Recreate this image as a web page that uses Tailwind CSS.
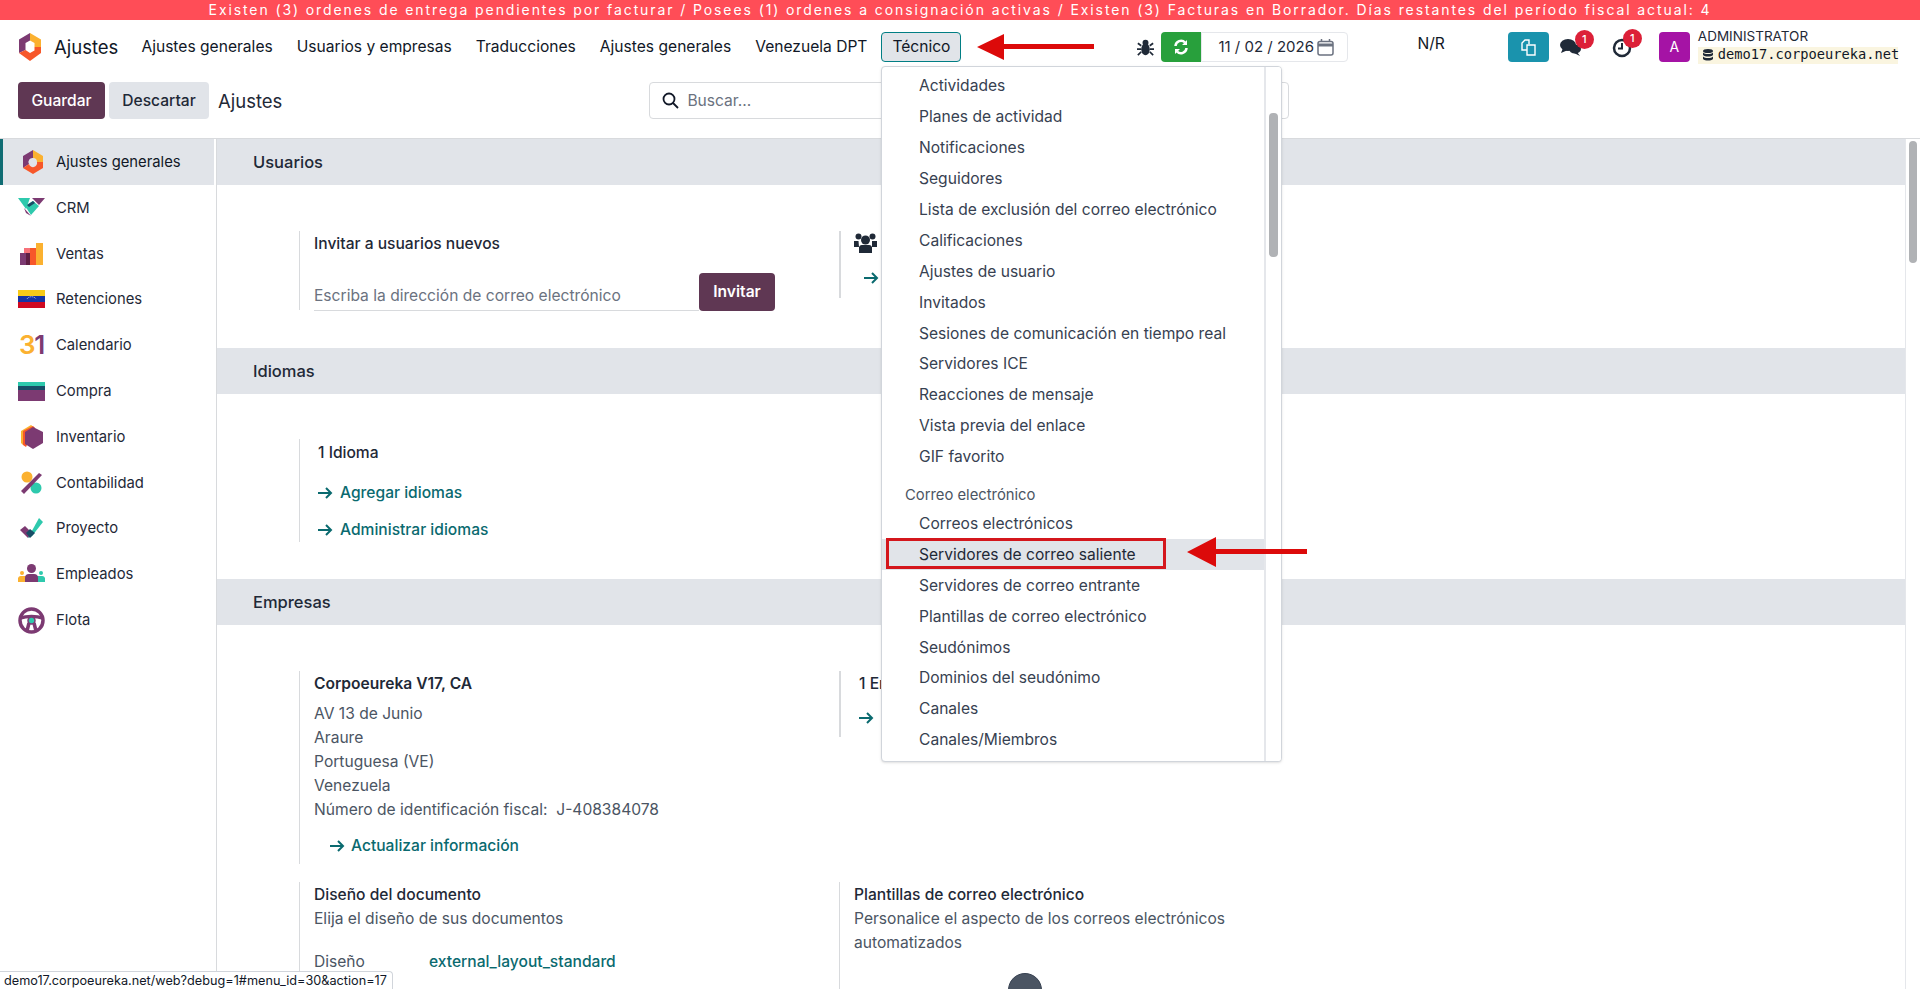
<!DOCTYPE html>
<html lang="es">
<head>
    <meta charset="UTF-8">
    <title>Ajustes</title>
    <script src="https://cdn.jsdelivr.net/npm/@tailwindcss/browser@4"></script>
</head>
<body class="relative h-[989px] overflow-hidden bg-white font-['Inter',sans-serif] text-[15.6px] leading-[22px] text-[#374151]">
    <!-- Banner -->
    <div class="h-5 bg-[#ff4d57] text-white text-center text-[14px] leading-[20px] tracking-[1.9px] whitespace-nowrap">Existen (3) ordenes de entrega pendientes por facturar / Posees (1) ordenes a consignación activas / Existen (3) Facturas en Borrador. Días restantes del período fiscal actual: 4</div>

    <!-- Navbar -->
    <nav class="relative h-[54px] flex items-center pl-[18px] text-[#111827] whitespace-nowrap">
        <svg class="w-[24px] h-[28px]" viewBox="0 0 24 28"><path d="M12 0 23 6.500V14H16.500V10L12 7.500Z" fill="#fbb130"/><path d="M12 0 1 6.500V20L7.500 17V10L12 7.500Z" fill="#7c3a72"/><path d="M1 20 12 28 23 20V14H16.500V17.500L12 20 7.500 17Z" fill="#f7572a"/></svg>
        <span class="ml-[12px] text-[18.5px]">Ajustes</span>
        <span class="ml-[23px]">Ajustes generales</span>
        <span class="ml-[24px]">Usuarios y empresas</span>
        <span class="ml-[24px]">Traducciones</span>
        <span class="ml-[24px]">Ajustes generales</span>
        <span class="ml-[24px]">Venezuela DPT</span>
        <span class="ml-[14px] w-[80px] h-[30px] flex items-center justify-center bg-[#e1e4e9] border border-[#017e84] rounded">Técnico</span>
        <svg class="ml-[16px] w-[117px] h-[32px]" viewBox="0 0 117 32"><path d="M0 16 27 3V13H117V18H27V29Z" fill="#dc0a0a"/></svg>
        <svg class="ml-[43px] w-[17px] h-[17px]" viewBox="0 0 20 20" fill="#1f2937"><ellipse cx="10" cy="12" rx="5" ry="7"/><circle cx="10" cy="4.500" r="3.500"/><path d="M1 5 5 8M19 5 15 8M0 12H5M20 12H15M1 19 5 15M19 19 15 15" stroke="#1f2937" stroke-width="2"/></svg>
        <span class="ml-[7px] w-[40px] h-[30px] rounded-l bg-[#28a03c] flex items-center justify-center">
            <svg class="w-[16px] h-[16px]" viewBox="0 0 16 16" fill="none" stroke="#fff" stroke-width="2.500"><path d="M2.500 7A5.500 5.500 0 0 1 12 3.500M13.500 9A5.500 5.500 0 0 1 4 12.500"/><path d="M14 1V6H9M2 15V10H7" fill="#fff" stroke="none"/></svg>
        </span>
        <div class="w-[147px] h-[30px] flex items-center pl-[16px] border border-[#e5e7eb] rounded-r text-[#1f2937] text-[15px]">
            <span>11 / 02 / 2026</span>
            <svg class="ml-[3px] w-[17px] h-[17px]" viewBox="0 0 17 17" fill="none" stroke="#6b7280" stroke-width="1.500"><rect x="1" y="2.500" width="15" height="13.500" rx="2"/><path d="M1 6H16" stroke-width="3"/><path d="M4.500 0V3M12.500 0V3"/></svg>
        </div>
        <span class="ml-[69px] mb-[6px]">N/R</span>
        <span class="ml-[63px] w-[41px] h-[30px] rounded bg-[#1a93ad] flex items-center justify-center">
            <svg class="w-[17px] h-[17px]" viewBox="0 0 17 17" fill="none" stroke="#fff" stroke-width="1.400"><path d="M7 11H2V4L5 1H9V5"/><path d="M8 6H15V16H7V6Z"/></svg>
        </span>
        <span class="relative ml-[11px] w-[22px] h-[20px]">
            <svg class="w-[22px] h-[20px]" viewBox="0 0 22 20" fill="#1f2937"><ellipse cx="8" cy="8" rx="8" ry="6"/><path d="M3 11 1 16 8 13Z"/><ellipse cx="15" cy="12" rx="6" ry="4.500"/><path d="M17 15 20 19 14 16Z"/></svg>
            <b class="absolute left-[15px] -top-[7px] w-[19px] h-[19px] rounded-full bg-[#dc2038] text-white text-[11px] leading-[19px] text-center font-medium">1</b>
        </span>
        <span class="relative ml-[30px] w-[20px] h-[20px] mt-[2px]">
            <svg class="w-[20px] h-[20px]" viewBox="0 0 20 20" fill="none" stroke="#1f2937" stroke-width="2.500"><circle cx="10" cy="10" r="8"/><path d="M10 5V10.500H6" stroke-width="2"/></svg>
            <b class="absolute left-[11px] -top-[9px] w-[19px] h-[19px] rounded-full bg-[#dc2038] text-white text-[11px] leading-[19px] text-center font-medium">1</b>
        </span>
        <span class="ml-[27px] w-[31px] h-[30px] rounded bg-[#a513a5] text-white flex items-center justify-center text-[14px]">A</span>
        <div class="ml-[8px] flex flex-col leading-none">
            <span class="text-[13.5px] text-[#1f2937] mb-[3px]">ADMINISTRATOR</span>
            <span class="w-[200px] h-[17px] flex items-center bg-[#faf5e0] font-['DejaVu_Sans_Mono',monospace] text-[13.7px] text-[#111827]">
                <svg class="w-[10px] h-[12px] mx-[5px] shrink-0" viewBox="0 0 10 12" fill="#1f2937"><ellipse cx="5" cy="2" rx="5" ry="2"/><path d="M0 3.500C2 5.500 8 5.500 10 3.500V6C8 8 2 8 0 6ZM0 7.500C2 9.500 8 9.500 10 7.500V10C8 12 2 12 0 10Z"/></svg>demo17.corpoeureka.net</span>
        </div>
    </nav>

    <!-- Control panel -->
    <div class="h-[65px] flex items-start pt-[8px] pl-[18px] border-b border-[#d8dadd]">
        <button class="w-[87px] h-[37px] rounded bg-[#5f3753] text-white font-medium">Guardar</button>
        <button class="ml-[4px] w-[100px] h-[37px] rounded bg-[#e1e4e9] text-[#1f2937] font-medium">Descartar</button>
        <span class="ml-[9px] h-[37px] flex items-center text-[18.5px] text-[#1f2937]">Ajustes</span>
        <div class="ml-[367px] w-[640px] h-[37px] flex items-center px-3 border border-[#d8dadd] rounded text-[#6b7280]">
            <svg class="w-[17px] h-[17px] text-[#111827]" viewBox="0 0 17 17" fill="none" stroke="currentColor" stroke-width="1.800"><circle cx="7" cy="7" r="5.500"/><path d="M11 11 16 16"/></svg>
            <span class="ml-[8px]">Buscar...</span>
        </div>
    </div>

    <div class="flex h-[850px] overflow-hidden">
        <!-- Sidebar -->
        <aside class="w-[217px] shrink-0 border-r border-[#d8dadd] text-[14.8px] text-[#1f2937]">
            <div class="h-[46px] w-[214px] flex items-center bg-[#e1e4e9] border-l-[3px] border-[#0f6c73] text-[#111827]">
                <svg class="ml-[16px] w-[28px] h-[28px]" viewBox="0 0 28 28"><path d="M14 2 24 8V14H18A4 4 0 0 0 14 10Z" fill="#fbb130"/><path d="M14 2 4 8V20L10 16A4 4 0 0 1 14 10Z" fill="#7c3a72"/><path d="M4 20 14 26 24 20V14H18A4 4 0 0 1 10 16Z" fill="#f7572a"/></svg>
                <span class="ml-[9px]">Ajustes generales</span>
            </div>
            <div class="h-[45.8px] flex items-center pl-[18px]">
                <svg class="w-[27px] h-[20px]" viewBox="0 0 27 20"><path d="M0 0H12L8 11Z" fill="#2ec9ad"/><path d="M14 0H27L21 7Z" fill="#7c3a72"/><path d="M6 10 13 18 8 15Z" fill="#7c3a72"/><path d="M7 8 15 3 21 8 13 17Z" fill="#2ec9ad"/><path d="M9 7 15 3 17 5 11 9Z" fill="#184d66"/></svg>
                <span class="ml-[11px]">CRM</span>
            </div>
            <div class="h-[45.8px] flex items-center pl-[18px]">
                <svg class="w-[27px] h-[24px]" viewBox="0 0 27 24"><rect x="18" y="1" width="7" height="22" fill="#fbb130"/><rect x="10" y="6" width="8" height="17" fill="#f7572a"/><rect x="6" y="6" width="6" height="8" fill="#f7727a"/><rect x="2" y="11" width="10" height="12" fill="#7c3a72"/><rect x="8" y="11" width="4" height="12" fill="#5f1e44"/></svg>
                <span class="ml-[11px]">Ventas</span>
            </div>
            <div class="h-[45.8px] flex items-center pl-[18px]">
                <svg class="w-[27px] h-[18px]" viewBox="0 0 27 18"><rect width="27" height="6" fill="#f7ca18"/><rect y="6" width="27" height="6" fill="#1434a4"/><rect y="12" width="27" height="6" fill="#cf0921"/><path d="M9 9A5 4 0 0 1 18 9" fill="none" stroke="#fff" stroke-width=".8" stroke-dasharray="1 1"/></svg>
                <span class="ml-[11px]">Retenciones</span>
            </div>
            <div class="h-[45.8px] flex items-center pl-[18px]">
                <span class="w-[27px] text-center font-semibold text-[26px] leading-none tracking-tighter text-[#7c3a72]"><span class="text-[#fbb130]">3</span>1</span>
                <span class="ml-[11px]">Calendario</span>
            </div>
            <div class="h-[45.8px] flex items-center pl-[18px]">
                <svg class="w-[27px] h-[19px]" viewBox="0 0 27 19"><rect width="27" height="4" fill="#2ec9ad"/><rect y="4" width="27" height="4" fill="#184d66"/><rect y="8" width="27" height="11" fill="#7c3a72"/></svg>
                <span class="ml-[11px]">Compra</span>
            </div>
            <div class="h-[45.8px] flex items-center pl-[18px]">
                <svg class="w-[27px] h-[24px]" viewBox="0 0 27 24"><path d="M3 6 13 0 17 3 5 20 3 18Z" fill="#fbb130"/><path d="M5 6 15 1 17 3 8 22 5 20Z" fill="#f7572a"/><path d="M15 2 25 7V18L15 24 7 19V7Z" fill="#7c3a72"/></svg>
                <span class="ml-[11px]">Inventario</span>
            </div>
            <div class="h-[45.8px] flex items-center pl-[18px]">
                <svg class="w-[27px] h-[24px]" viewBox="0 0 27 24"><circle cx="9" cy="6" r="5.500" fill="#fbb130"/><circle cx="18" cy="17" r="5.500" fill="#2ec9ad"/><path d="M3 20 21 2 24 4 6 23Z" fill="#7c3a72"/></svg>
                <span class="ml-[11px]">Contabilidad</span>
            </div>
            <div class="h-[45.8px] flex items-center pl-[18px]">
                <svg class="w-[27px] h-[22px]" viewBox="0 0 27 22"><path d="M2 13 7 9 14 16 10 21Z" fill="#7c3a72"/><path d="M10 21 21 1 25 5 14 19Z" fill="#2ec9ad"/><path d="M8 16 12 12 17 16 12 21Z" fill="#184d66"/></svg>
                <span class="ml-[11px]">Proyecto</span>
            </div>
            <div class="h-[45.8px] flex items-center pl-[18px]">
                <svg class="w-[27px] h-[20px]" viewBox="0 0 27 20"><circle cx="13.500" cy="4.500" r="4.500" fill="#7c3a72"/><circle cx="4" cy="9" r="2" fill="#fbb130"/><circle cx="23" cy="9" r="2" fill="#2ec9ad"/><path d="M0 18V14A3 3 0 0 1 3 12H9L14 18Z" fill="#fbb130"/><path d="M14 18 18 12H24A3 3 0 0 1 27 14V18Z" fill="#2ec9ad"/><path d="M7 18V14A4 4 0 0 1 11 10H16A4 4 0 0 1 20 14V18Z" fill="#7c3a72"/></svg>
                <span class="ml-[11px]">Empleados</span>
            </div>
            <div class="h-[45.8px] flex items-center pl-[18px]">
                <svg class="w-[27px] h-[27px]" viewBox="0 0 27 27" fill="none"><circle cx="13.500" cy="13.500" r="11.500" stroke="#7c3a72" stroke-width="3.500"/><path d="M3 11C8 9 19 9 24 11M9 24 11 16M18 24 16 16" stroke="#7c3a72" stroke-width="3.500"/><circle cx="13.500" cy="13.500" r="3.500" fill="#2ec9ad" stroke="#7c3a72" stroke-width="1.500"/></svg>
                <span class="ml-[11px]">Flota</span>
            </div>
        </aside>

        <!-- Settings -->
        <main class="flex-1 min-w-0">
            <h2 class="h-[46px] flex items-center pl-[36px] bg-[#e1e4e9] text-[16.5px] font-medium text-[#1f2937]">Usuarios</h2>
            <div class="flex pl-[82px] pt-[46px] h-[163px]">
                <div class="w-[540px] h-[79px] border-l border-[#d8dadd] pl-[14px]">
                    <p class="mt-[2px] font-medium text-[#1f2937]">Invitar a usuarios nuevos</p>
                    <div class="flex mt-[18px]">
                        <div class="w-[385px] h-[38px] border-b border-[#d8dadd] pt-[12px] text-[#6b7280]">Escriba la dirección de correo electrónico</div>
                        <button class="w-[76px] h-[38px] rounded bg-[#5f3753] text-white font-semibold">Invitar</button>
                    </div>
                </div>
                <div class="h-[67px] border-l-2 border-[#d8dadd] pl-[13px]">
                    <svg class="mt-[2px] w-[23px] h-[22px]" viewBox="0 0 23 22" fill="#1f2937"><circle cx="4.500" cy="3.500" r="3"/><circle cx="18.500" cy="3.500" r="3"/><circle cx="11.500" cy="7" r="4.500"/><path d="M0 8H4.500L5 14H0ZM18 8H23V14H18Z"/><path d="M5 14A3 3 0 0 1 8 12H15A3 3 0 0 1 18 14V20H5Z"/></svg>
                    <svg class="mt-[17px] ml-[10px] w-[15px] h-[12px]" viewBox="0 0 15 12" fill="none" stroke="#0a6a6f" stroke-width="2"><path d="M0 6H13M8 1 13 6 8 11"/></svg>
                </div>
            </div>

            <h2 class="h-[46px] flex items-center pl-[36px] bg-[#e1e4e9] text-[16.5px] font-medium text-[#1f2937]">Idiomas</h2>
            <div class="pl-[82px] pt-[45px] h-[185px]">
                <div class="h-[103px] border-l border-[#d8dadd] pl-[18px]">
                    <p class="font-medium text-[#1f2937] pt-[3px]">1 Idioma</p>
                    <p class="mt-[18px] flex items-center text-[#0a6a6f] font-medium">
                        <svg class="w-[15px] h-[12px] mr-[7px]" viewBox="0 0 15 12" fill="none" stroke="#0a6a6f" stroke-width="2"><path d="M0 6H13M8 1 13 6 8 11"/></svg>Agregar idiomas</p>
                    <p class="mt-[15px] flex items-center text-[#0a6a6f] font-medium">
                        <svg class="w-[15px] h-[12px] mr-[7px]" viewBox="0 0 15 12" fill="none" stroke="#0a6a6f" stroke-width="2"><path d="M0 6H13M8 1 13 6 8 11"/></svg>Administrar idiomas</p>
                </div>
            </div>

            <h2 class="h-[46px] flex items-center pl-[36px] bg-[#e1e4e9] text-[16.5px] font-medium text-[#1f2937]">Empresas</h2>
            <div class="flex pl-[82px] pt-[46px]">
                <div class="w-[540px] h-[193px] border-l border-[#d8dadd] pl-[14px]">
                    <p class="font-semibold text-[#1f2937] pt-[2px]">Corpoeureka V17, CA</p>
                    <div class="mt-[7px] leading-[24px] text-[#4b5563]">
                        <p>AV 13 de Junio</p>
                        <p>Araure</p>
                        <p>Portuguesa (VE)</p>
                        <p>Venezuela</p>
                        <p>Número de identificación fiscal:&nbsp; J-408384078</p>
                    </div>
                    <p class="mt-[13px] pl-[16px] flex items-center text-[#0a6a6f] font-medium">
                        <svg class="w-[15px] h-[12px] mr-[6px]" viewBox="0 0 15 12" fill="none" stroke="#0a6a6f" stroke-width="2"><path d="M0 6H13M8 1 13 6 8 11"/></svg>Actualizar información</p>
                </div>
                <div class="h-[66px] border-l-2 border-[#d8dadd] pl-[18px]">
                    <p class="font-medium text-[#1f2937] pt-[2px]">1 Empresa</p>
                    <svg class="mt-[17px] w-[15px] h-[12px]" viewBox="0 0 15 12" fill="none" stroke="#0a6a6f" stroke-width="2"><path d="M0 6H13M8 1 13 6 8 11"/></svg>
                </div>
            </div>
            <div class="flex pl-[82px] pt-[18px]">
                <div class="w-[540px] border-l border-[#d8dadd] pl-[14px]">
                    <p class="font-medium text-[#1f2937] mt-[2px]">Diseño del documento</p>
                    <p class="mt-[2px] text-[#4b5563]">Elija el diseño de sus documentos</p>
                    <div class="flex mt-[21px]">
                        <span class="w-[115px] text-[#4b5563]">Diseño</span>
                        <span class="text-[#0a6a6f] font-medium">external_layout_standard</span>
                    </div>
                </div>
                <div class="w-[400px] border-l border-[#d8dadd] pl-[14px]">
                    <p class="font-medium text-[#1f2937] mt-[2px]">Plantillas de correo electrónico</p>
                    <p class="mt-[1px] leading-[24px] text-[#4b5563]">Personalice el aspecto de los correos electrónicos automatizados</p>
                    <div class="flex mt-[18px]">
                        <span class="w-[154px] pt-[12px] text-[#1f2937] font-medium">Colorido</span>
                        <span class="w-[34px] h-[34px] rounded-full bg-[#4b5563] border border-[#374151]"></span>
                    </div>
                </div>
            </div>
        </main>
        <!-- Page scrollbar -->
        <div class="w-[15px] shrink-0 border-l border-[#e5e7eb] bg-white pt-[2px] pl-[3px]">
            <div class="w-[8px] h-[122px] rounded bg-[#b0b2b5]"></div>
        </div>
    </div>

    <!-- Dropdown of Técnico -->
    <div class="absolute left-[881px] top-[66px] w-[401px] h-[696px] bg-white border border-[#d1d5db] rounded shadow-sm overflow-hidden text-[#374151]">
        <div class="flex flex-col pt-[4px]">
            <a class="h-[30.9px] pl-[37px] flex items-center">Actividades</a>
            <a class="h-[30.9px] pl-[37px] flex items-center">Planes de actividad</a>
            <a class="h-[30.9px] pl-[37px] flex items-center">Notificaciones</a>
            <a class="h-[30.9px] pl-[37px] flex items-center">Seguidores</a>
            <a class="h-[30.9px] pl-[37px] flex items-center">Lista de exclusión del correo electrónico</a>
            <a class="h-[30.9px] pl-[37px] flex items-center">Calificaciones</a>
            <a class="h-[30.9px] pl-[37px] flex items-center">Ajustes de usuario</a>
            <a class="h-[30.9px] pl-[37px] flex items-center">Invitados</a>
            <a class="h-[30.9px] pl-[37px] flex items-center">Sesiones de comunicación en tiempo real</a>
            <a class="h-[30.9px] pl-[37px] flex items-center">Servidores ICE</a>
            <a class="h-[30.9px] pl-[37px] flex items-center">Reacciones de mensaje</a>
            <a class="h-[30.9px] pl-[37px] flex items-center">Vista previa del enlace</a>
            <a class="h-[30.9px] pl-[37px] flex items-center">GIF favorito</a>
            <p class="mt-[8px] h-[28px] pl-[23px] flex items-center text-[14.8px] text-[#4b5563]">Correo electrónico</p>
            <a class="h-[30.9px] pl-[37px] flex items-center">Correos electrónicos</a>
            <a class="h-[30.9px] pl-[37px] flex items-center bg-[#e1e4e9] text-[#1f2937] mr-[17px]">Servidores de correo saliente</a>
            <a class="h-[30.9px] pl-[37px] flex items-center">Servidores de correo entrante</a>
            <a class="h-[30.9px] pl-[37px] flex items-center">Plantillas de correo electrónico</a>
            <a class="h-[30.9px] pl-[37px] flex items-center">Seudónimos</a>
            <a class="h-[30.9px] pl-[37px] flex items-center">Dominios del seudónimo</a>
            <a class="h-[30.9px] pl-[37px] flex items-center">Canales</a>
            <a class="h-[30.9px] pl-[37px] flex items-center">Canales/Miembros</a>
        </div>
        <div class="absolute right-0 top-0 bottom-0 w-[17px] border-l-2 border-[#e5e7eb] bg-white">
            <div class="mt-[46px] ml-[3px] w-[9px] h-[144px] rounded bg-[#b0b2b5]"></div>
        </div>
    </div>

    <!-- Annotations -->
    <div class="absolute left-[886px] top-[538px] w-[280px] h-[31px] border-[3px] border-[#d4161c]"></div>
    <svg class="absolute left-[1187px] top-[536px] w-[120px] h-[32px]" viewBox="0 0 120 32"><path d="M0 16 29 1V13H120V18H29V31Z" fill="#dc0a0a"/></svg>

    <!-- Browser link preview -->
    <div class="absolute left-0 bottom-0 h-[18px] w-[393px] pl-[4px] bg-white border-t border-r border-[#d1d5db] rounded-tr text-[12.7px] leading-[18px] text-[#111827]">demo17.corpoeureka.net/web?debug=1#menu_id=30&amp;action=17</div>
</body>
</html>
